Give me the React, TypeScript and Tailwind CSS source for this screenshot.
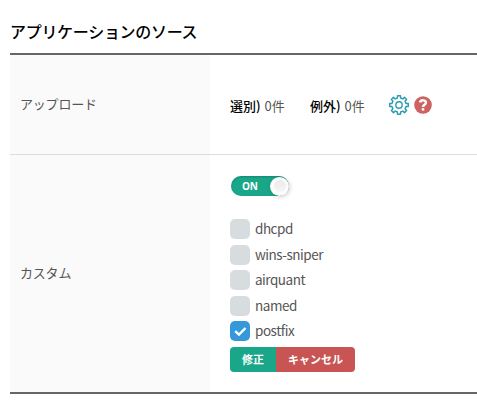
import React from "react";

const sources = [
  { name: "dhcpd", checked: false },
  { name: "wins-sniper", checked: false },
  { name: "airquant", checked: false },
  { name: "named", checked: false },
  { name: "postfix", checked: true },
];

function gearPath(): string {
  const outline: [number, number][] = [
    [-13, 7.2],
    [-9, 9.4],
    [9, 9.4],
    [13, 7.2],
  ];
  const points: string[] = [];
  for (let tooth = 0; tooth < 8; tooth++) {
    for (const [offset, radius] of outline) {
      const angle = ((tooth * 45 + offset) * Math.PI) / 180;
      points.push(`${(radius * Math.sin(angle)).toFixed(2)} ${(-radius * Math.cos(angle)).toFixed(2)}`);
    }
  }
  return `M${points.join("L")}Z`;
}

function GearIcon() {
  return (
    <svg className="h-[22px] w-[22px]" viewBox="-11 -11 22 22" fill="none" stroke="#2f9db3" strokeLinejoin="round">
      <path d={gearPath()} strokeWidth="1.5" />
      <circle r="3.2" strokeWidth="1.4" />
    </svg>
  );
}

function HelpIcon() {
  return (
    <svg className="h-[18px] w-[18px]" viewBox="-9 -9 18 18" fill="none">
      <circle r="8.8" fill="#cd6261" />
      <path d="M-2.9 -2.4C-2.3 -5.5 2.9 -5.3 2.9 -2.2C2.9 -.3 0 -.1 0 1.9" stroke="#fff" strokeWidth="2.5" />
      <rect x="-1.3" y="3.1" width="2.6" height="2.5" fill="#fff" />
    </svg>
  );
}

function Checkbox({ checked }: { checked: boolean }) {
  return (
    <span
      className={
        checked
          ? "flex h-5 w-5 items-center justify-center rounded-[5px] bg-[#3498db]"
          : "h-5 w-5 rounded-[5px] bg-[#d7dcde]"
      }
    >
      {checked && (
        <svg className="h-5 w-5" viewBox="0 0 20 20" fill="none" stroke="#fff" strokeWidth="2.4">
          <path d="M5.2 10.2L9 13.6L15.5 7" />
        </svg>
      )}
    </span>
  );
}

export default function App() {
  return (
    <main className="h-[416px] overflow-hidden bg-white pl-2.5 font-['Noto_Sans_CJK_JP',sans-serif] text-[#555]">
      <h1 className="h-[53px] pt-[19px] text-[16px] leading-6 font-medium tracking-[-0.3px] text-black">
        アプリケーションのソース
      </h1>
      <div className="border-y-2 border-[#666]">
        <section className="flex h-[99px]">
          <div className="flex w-[200px] items-center bg-[#fafafa] pb-0.5 pl-2.5 text-[13px] tracking-[-0.2px]">アップロード</div>
          <div className="flex items-center pl-5 text-[13px]">
            <span className="w-20 whitespace-nowrap pt-0.5">
              <b className="font-medium text-black">選別)</b> <span className="ml-px">0件</span>
            </span>
            <span className="w-[78px] whitespace-nowrap pt-0.5">
              <b className="font-medium text-black">例外)</b> <span className="ml-px">0件</span>
            </span>
            <GearIcon />
            <span className="ml-1">
              <HelpIcon />
            </span>
          </div>
        </section>
        <section className="flex h-[238px] border-t border-[#ddd]">
          <div className="flex w-[200px] items-center bg-[#fafafa] pb-0.5 pl-2.5 text-[13px] tracking-[-0.2px]">カスタム</div>
          <div className="pt-[21px] pl-5">
            <div className="ml-px flex h-5 w-[58px] items-center justify-between rounded-full bg-[#1aa689] pl-[11px] shadow-[inset_0_1px_2px_rgba(0,0,0,0.2)]">
              <span className="font-['Open_Sans',sans-serif] text-[10px] font-bold tracking-[-0.3px] text-white">ON</span>
              <span className="flex h-[19px] w-[19px] items-center justify-center rounded-full bg-[#fcfcfc] shadow-[1px_1px_4px_rgba(0,0,0,0.2)]">
                <span className="h-3 w-3 rounded-full bg-linear-to-b from-[#eaeaea] to-[#f6f6f6]" />
              </span>
            </div>
            <ul className="mt-[23px] flex flex-col gap-[5.5px]">
              {sources.map((source) => (
                <li key={source.name} className="flex h-5 items-center gap-[5px] text-[13.5px] leading-5 tracking-[-0.48px]">
                  <Checkbox checked={source.checked} />
                  <span className="pb-0.5">{source.name}</span>
                </li>
              ))}
            </ul>
            <div className="mt-1.5 flex h-[25px] w-[125px] overflow-hidden rounded-[4px] text-[11px] font-bold text-white">
              <button className="w-[46px] bg-[#1aa689]">修正</button>
              <button className="flex-1 bg-[#c85554]">キャンセル</button>
            </div>
          </div>
        </section>
      </div>
    </main>
  );
}
